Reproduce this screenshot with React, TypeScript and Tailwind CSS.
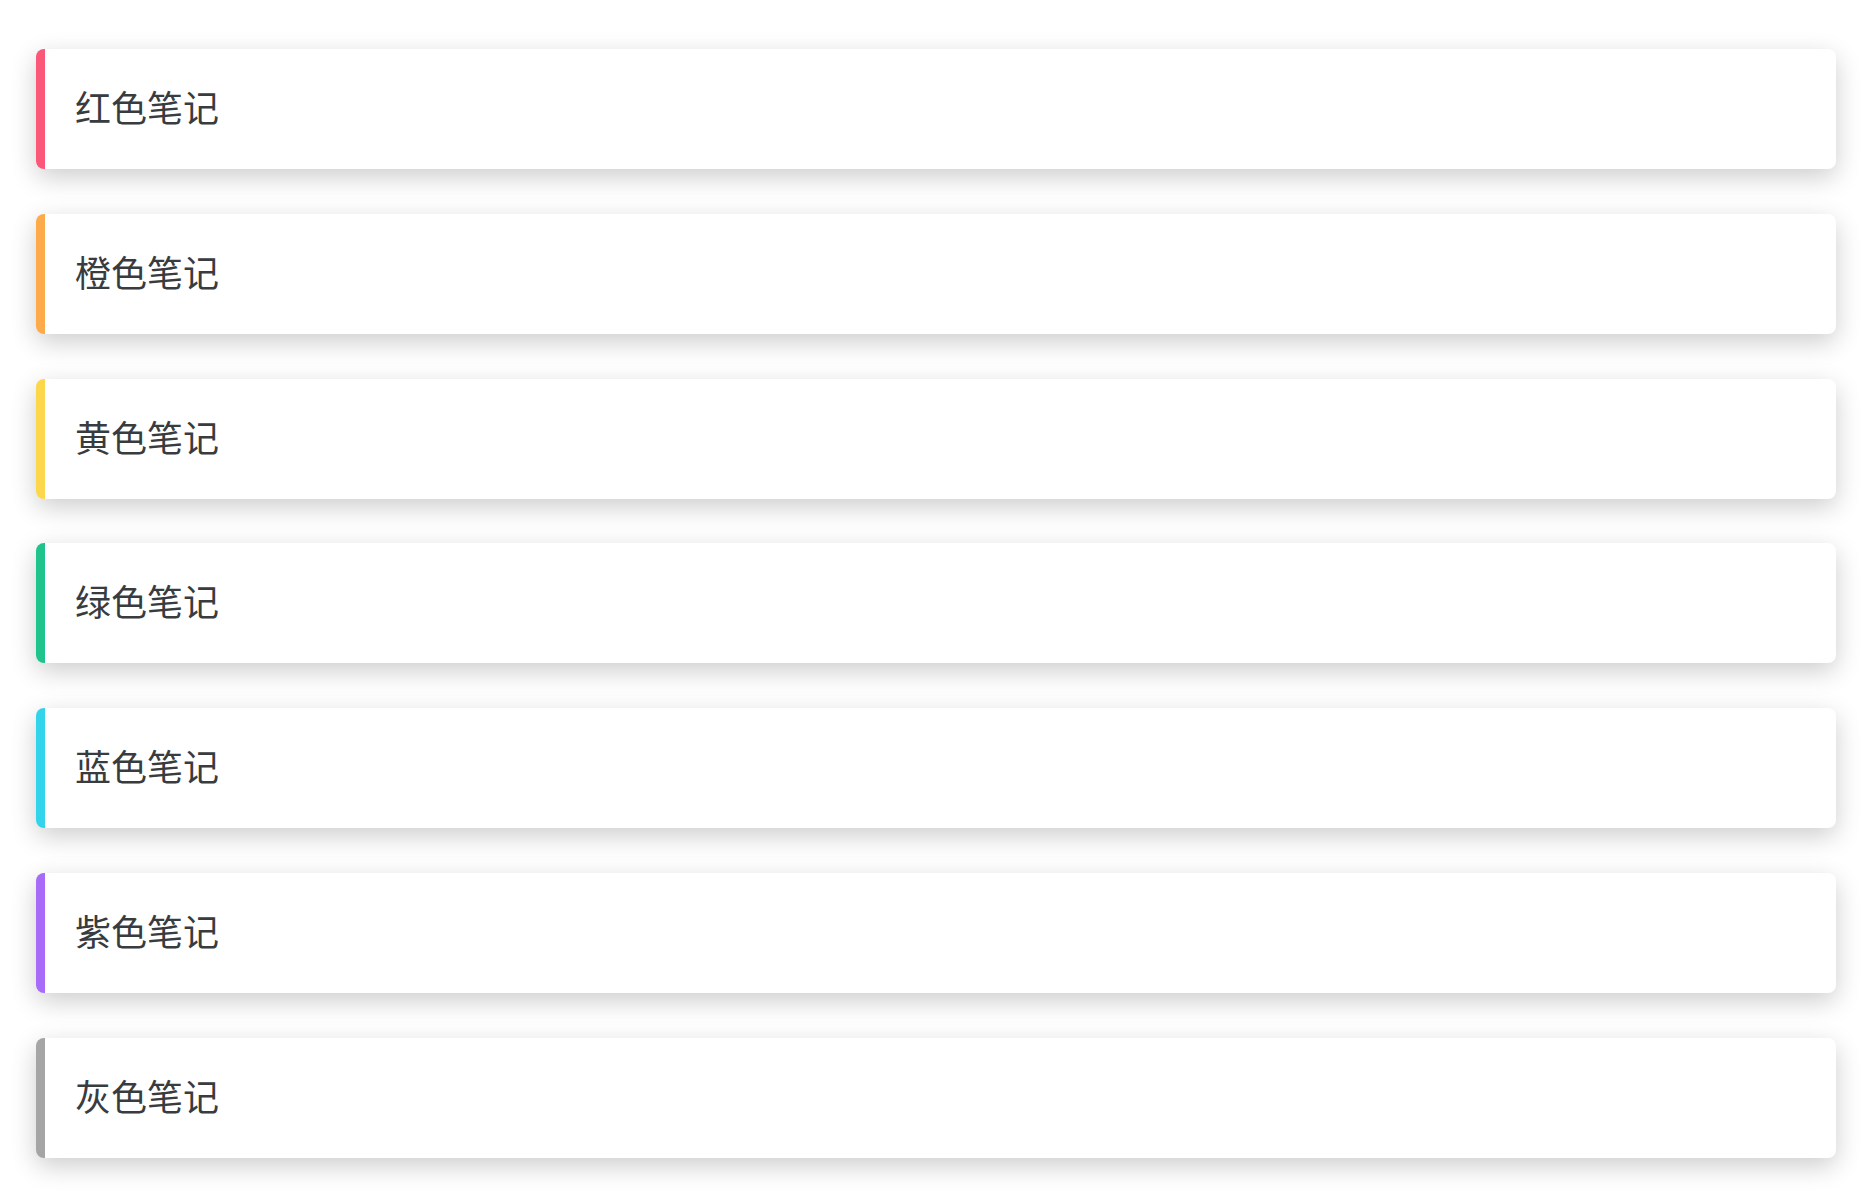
const notes = [
  { label: "红色笔记", color: "border-l-[#fb5879]" },
  { label: "橙色笔记", color: "border-l-[#fdab4a]" },
  { label: "黄色笔记", color: "border-l-[#fdd74b]" },
  { label: "绿色笔记", color: "border-l-[#1ec48c]" },
  { label: "蓝色笔记", color: "border-l-[#32d4ec]" },
  { label: "紫色笔记", color: "border-l-[#a86bf8]" },
  { label: "灰色笔记", color: "border-l-[#a5a5a5]" },
];

export default function App() {
  return (
    <div
      className="min-h-screen bg-white pt-[49px] pl-[36px] pr-[40px] pb-[39px]"
      style={{ fontFamily: '"Noto Sans CJK SC", "Noto Sans", sans-serif' }}
    >
      <div className="flex flex-col gap-[44.8px]">
        {notes.map((note) => (
          <div
            key={note.label}
            className={`h-[120px] flex items-center bg-white rounded-[8px] border-l-[9px] ${note.color} pl-[30px] pb-[6px] shadow-[0_8px_26px_rgba(0,0,0,0.2)]`}
          >
            <span className="text-[36px] leading-none text-[#383c3f]">{note.label}</span>
          </div>
        ))}
      </div>
    </div>
  );
}
